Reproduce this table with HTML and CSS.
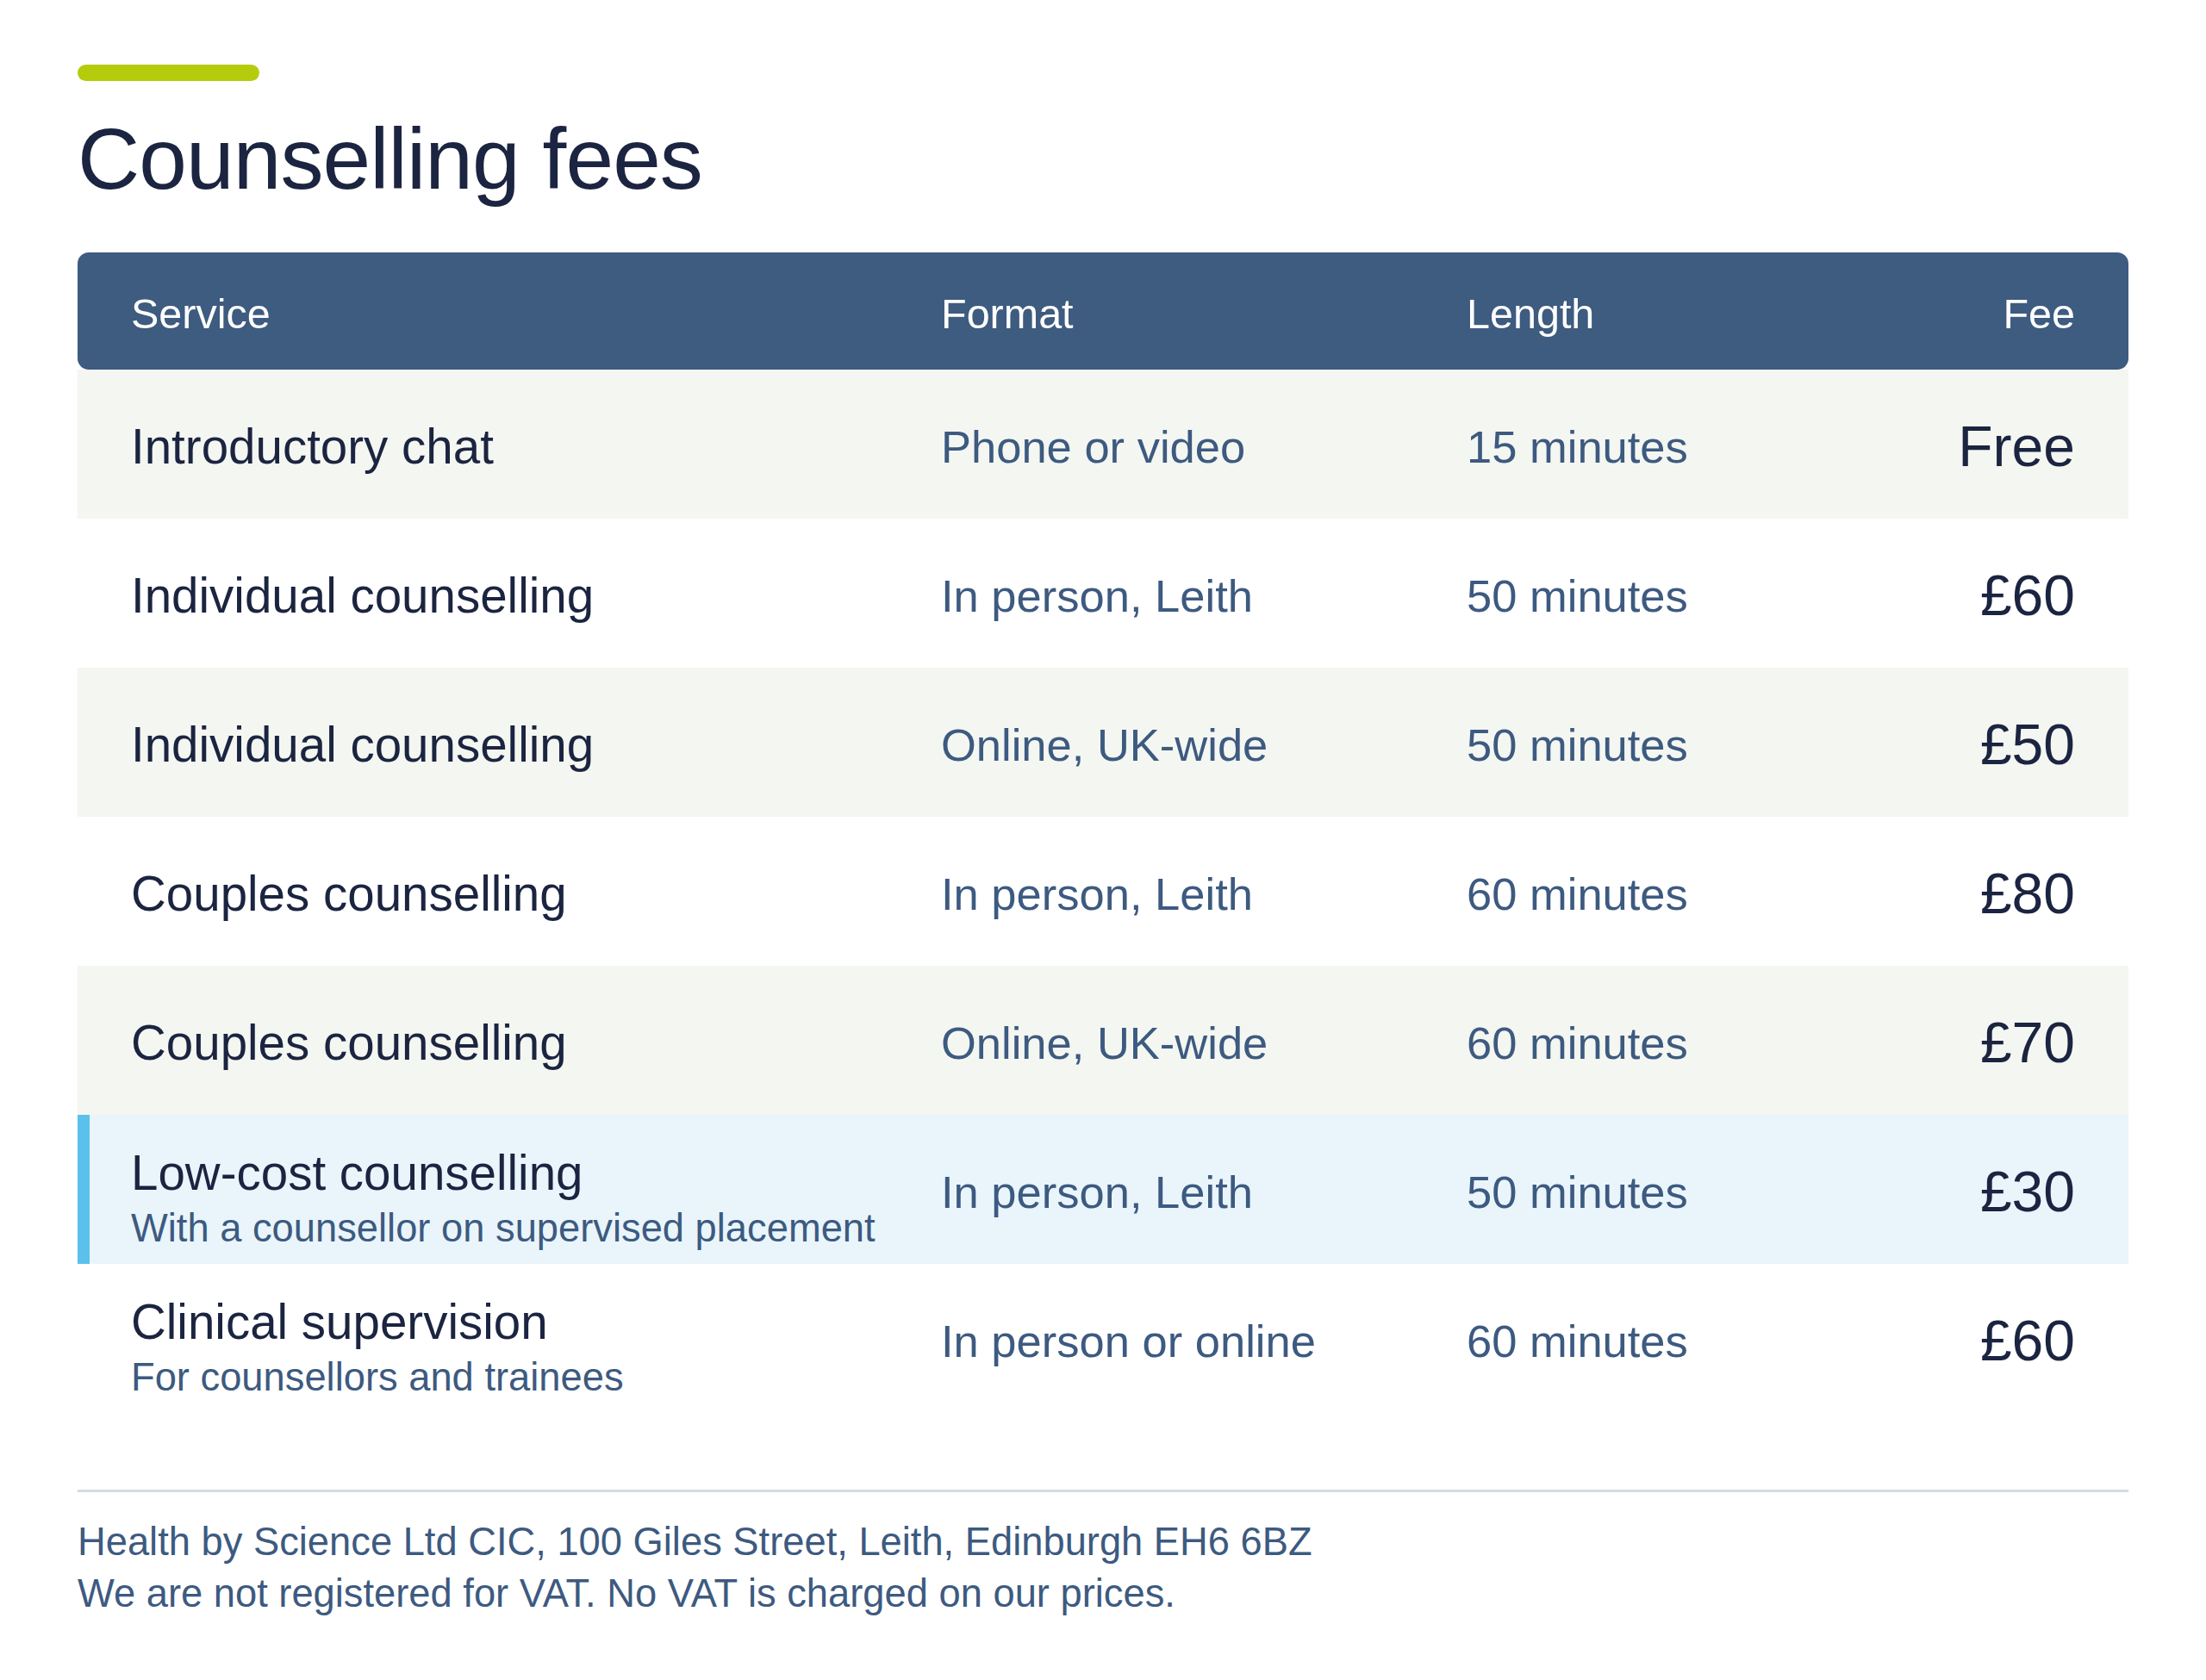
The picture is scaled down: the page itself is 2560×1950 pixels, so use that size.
FILE: index.html
```html
<!DOCTYPE html>
<html lang="en">
<head>
<meta charset="utf-8">
<title>Counselling fees</title>
<link rel="stylesheet" href="styles.css">
</head>
<body>
<main class="page">
  <div class="accent"></div>
  <h1 class="title">Counselling fees</h1>

  <div class="fees">
    <div class="row head">
      <div class="c-service">Service</div>
      <div class="c-format">Format</div>
      <div class="c-length">Length</div>
      <div class="c-fee">Fee</div>
    </div>

    <div class="row alt">
      <div class="c-service"><div class="svc">Introductory chat</div></div>
      <div class="c-format">Phone or video</div>
      <div class="c-length">15 minutes</div>
      <div class="c-fee">Free</div>
    </div>

    <div class="row">
      <div class="c-service"><div class="svc">Individual counselling</div></div>
      <div class="c-format">In person, Leith</div>
      <div class="c-length">50 minutes</div>
      <div class="c-fee">£60</div>
    </div>

    <div class="row alt">
      <div class="c-service"><div class="svc">Individual counselling</div></div>
      <div class="c-format">Online, UK-wide</div>
      <div class="c-length">50 minutes</div>
      <div class="c-fee">£50</div>
    </div>

    <div class="row">
      <div class="c-service"><div class="svc">Couples counselling</div></div>
      <div class="c-format">In person, Leith</div>
      <div class="c-length">60 minutes</div>
      <div class="c-fee">£80</div>
    </div>

    <div class="row alt">
      <div class="c-service"><div class="svc">Couples counselling</div></div>
      <div class="c-format">Online, UK-wide</div>
      <div class="c-length">60 minutes</div>
      <div class="c-fee">£70</div>
    </div>

    <div class="row highlight">
      <div class="c-service two">
        <div class="svc">Low-cost counselling</div>
        <div class="sub">With a counsellor on supervised placement</div>
      </div>
      <div class="c-format">In person, Leith</div>
      <div class="c-length">50 minutes</div>
      <div class="c-fee">£30</div>
    </div>

    <div class="row">
      <div class="c-service two">
        <div class="svc">Clinical supervision</div>
        <div class="sub">For counsellors and trainees</div>
      </div>
      <div class="c-format">In person or online</div>
      <div class="c-length">60 minutes</div>
      <div class="c-fee">£60</div>
    </div>
  </div>

  <footer class="foot">
    <p>Health by Science Ltd CIC, 100 Giles Street, Leith, Edinburgh EH6 6BZ</p>
    <p>We are not registered for VAT. No VAT is charged on our prices.</p>
  </footer>
</main>
</body>
</html>
```

FILE: styles.css
```css
html, body {
  margin: 0;
  padding: 0;
  background: #ffffff;
}

body {
  font-family: "Liberation Sans", Arial, Helvetica, sans-serif;
  color: #1b2440;
}

.page {
  padding: 75px 90px 60px;
}

.accent {
  width: 211px;
  height: 19px;
  border-radius: 10px;
  background: #b5cc0c;
}

.title {
  margin: 30px 0 49px;
  font-size: 100px;
  line-height: 120px;
  font-weight: 400;
  letter-spacing: -0.9px;
  color: #1b2440;
}

.fees {
  display: flex;
  flex-direction: column;
}

.row {
  display: grid;
  grid-template-columns: 940px 610px 1fr auto;
  align-items: center;
  height: 173px;
  box-sizing: border-box;
  padding: 5px 62px 0;
  background: #ffffff;
}

.row.head {
  height: 136px;
  background: #3e5b80;
  border-radius: 13px;
  color: #ffffff;
  font-size: 48.5px;
}

.row.alt {
  background: #f4f6f1;
}

.row.highlight {
  background: #e9f5fb;
  border-left: 14px solid #5bc0eb;
  padding-left: 48px;
}

.svc {
  font-size: 56.5px;
  line-height: 67px;
  color: #1b2440;
}

.c-service.two {
  padding-top: 16px;
}

.sub {
  margin-top: 2px;
  font-size: 45.3px;
  line-height: 58px;
  color: #3d5a80;
}

.row:not(.head) .c-format,
.row:not(.head) .c-length {
  font-size: 52.5px;
  color: #3d5a80;
}

.c-fee {
  text-align: right;
}

.row:not(.head) .c-fee {
  font-size: 66px;
  color: #1b2440;
}

.foot {
  margin-top: 89px;
  border-top: 3px solid #d3dae2;
  padding-top: 28px;
}

.foot p {
  margin: 0;
  font-size: 45.3px;
  line-height: 60px;
  color: #3d5a80;
}
```
